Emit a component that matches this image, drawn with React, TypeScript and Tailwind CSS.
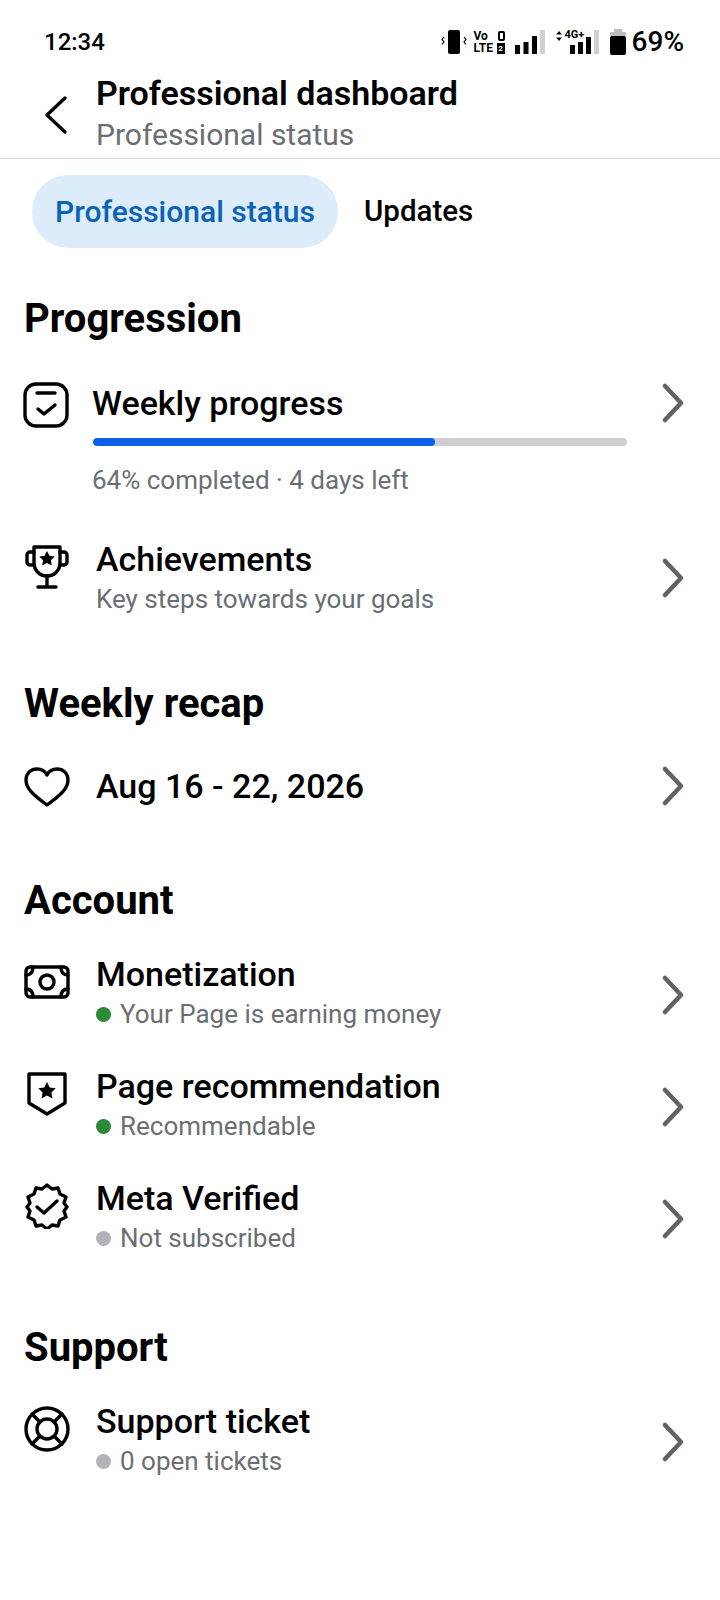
import type { ReactNode } from "react";

function Dot({ on }: { on?: boolean }) {
  return <span className={`w-[15px] h-[15px] rounded-full mr-[9px] ${on ? "bg-[#2b8a36]" : "bg-[#b0b3b8]"}`} />;
}

function IconSlot({ children }: { children: ReactNode }) {
  return <div className="w-[72px] pl-[24px] pb-[22px] flex items-center shrink-0">{children}</div>;
}

function Chevron({ className }: { className?: string }) {
  return (
    <svg width="22" height="40" viewBox="0 0 22 40" fill="none" stroke="#5f6368" strokeWidth="4.5" strokeLinecap="round" strokeLinejoin="round" className={`shrink-0 ${className ?? ""}`}>
      <path d="M3 3l16 17L3 37" />
    </svg>
  );
}

function Row({ icon, title, sub, on, className, chevron = "mt-[3px]" }: { icon: ReactNode; title: string; sub: ReactNode; on?: boolean; className?: string; chevron?: string }) {
  return (
    <div className={`flex items-center h-[84px] pr-[36px] ${className ?? ""}`}>
      <IconSlot>{icon}</IconSlot>
      <div className="flex-1 pl-[24px]">
        <div className="text-[34px] leading-[42px] text-black font-medium">{title}</div>
        <div className="flex items-center text-[26px] leading-[38px] text-[#6a6f74]">
          {on !== undefined && <Dot on={on} />}
          {sub}
        </div>
      </div>
      <Chevron className={chevron} />
    </div>
  );
}

function Heading({ children, className }: { children: ReactNode; className?: string }) {
  return <h2 className={`pl-[24px] text-[40px] leading-[46px] font-bold text-black ${className ?? ""}`}>{children}</h2>;
}

function StatusIcons() {
  return (
    <div className="flex items-center h-[30px]">
      <svg width="26" height="26" viewBox="0 0 26 26">
        <rect x="7" y="1" width="12" height="24" rx="2" fill="#000" />
        <path d="M3 8l-2 2.500 2 2.500-2 2.500M23 8l2 2.500-2 2.500 2 2.500" fill="none" stroke="#000" strokeWidth="1.2" />
      </svg>
      <div className="ml-[7px] w-[31px] flex flex-col font-bold text-black text-[12px] leading-[12px]">
        <div className="flex items-center justify-between">
          <span>Vo</span>
          <span className="w-[7px] h-[10px] border-2 border-black rounded-[2px]" />
        </div>
        <div className="flex items-center justify-between">
          <span>LTE</span>
          <span className="w-[8px] h-[11px] bg-black text-white text-[8px] leading-[11px] text-center">2</span>
        </div>
      </div>
      <svg width="30" height="24" viewBox="0 0 30 24" className="ml-[10px]">
        <rect x="0" y="15" width="5" height="9" fill="#000" />
        <rect x="8.500" y="12" width="5" height="12" fill="#000" />
        <rect x="17" y="6" width="5" height="18" fill="#000" />
        <rect x="25" y="0" width="5" height="24" fill="#d0d0d0" />
      </svg>
      <div className="relative w-[43px] h-[24px] ml-[11px]">
        <svg className="absolute left-0 top-0" width="43" height="24" viewBox="0 0 43 24">
          <path d="M3 1l3 3.500H0zM3 11l3-3.500H0z" fill="#000" />
          <rect x="14" y="15" width="5" height="9" fill="#000" />
          <rect x="22" y="12" width="5" height="12" fill="#000" />
          <rect x="30" y="7" width="5" height="17" fill="#000" />
          <rect x="38" y="0" width="5" height="24" fill="#d0d0d0" />
        </svg>
        <span className="absolute left-[9px] top-[-1px] text-[11px] leading-[12px] font-bold text-black">4G+</span>
      </div>
      <svg width="16" height="26" viewBox="0 0 16 26" className="ml-[11px]">
        <rect x="4" y="0" width="8" height="4" fill="#bdbdbd" />
        <rect x="0" y="3" width="16" height="4" rx="1" fill="#bdbdbd" />
        <rect x="0" y="7" width="16" height="19" rx="2" fill="#000" />
      </svg>
      <span className="ml-[6px] text-[28px] leading-[30px] font-medium text-black">69%</span>
    </div>
  );
}

const ic = { fill: "none", stroke: "#000", strokeWidth: 3.4, strokeLinecap: "round" as const, strokeLinejoin: "round" as const };
const trophyStar = "M23 7l2.400 4.800 5.300.8-3.800 3.700.9 5.300-4.800-2.500-4.800 2.500.9-5.300-3.800-3.700 5.300-.8z";
const shieldStar = "M23 11l2.700 5.400 6 .9-4.300 4.200 1 5.900-5.400-2.800-5.400 2.800 1-5.900-4.300-4.200 6-.9z";

export default function App() {
  return (
    <div className="w-[720px] h-[1600px] bg-white overflow-hidden font-['Roboto',sans-serif]">
      <div className="flex items-center justify-between h-[70px] pl-[44px] pr-[36px] pt-[14px]">
        <span className="text-[24px] font-medium text-black">12:34</span>
        <StatusIcons />
      </div>

      <div className="flex items-center h-[88px] border-b border-[#d4d6d8] box-content">
        <svg width="24" height="40" viewBox="0 0 24 40" fill="none" stroke="#000" strokeWidth="3.4" strokeLinecap="round" strokeLinejoin="round" className="ml-[44px] mr-[28px] mt-[2px]">
          <path d="M21 3L3 20l18 17" />
        </svg>
        <div>
          <div className="text-[34px] leading-[42px] font-semibold text-black">Professional dashboard</div>
          <div className="text-[30px] leading-[42px] text-[#6a6f74]">Professional status</div>
        </div>
      </div>

      <div className="flex items-center pl-[32px] pt-[16px]">
        <div className="h-[73px] w-[306px] flex items-center justify-center rounded-[36px] bg-[#dcecfb] text-[30px] font-medium text-[#0a63b8]">Professional status</div>
        <div className="ml-[26px] text-[29.500px] font-medium text-black">Updates</div>
      </div>

      <Heading className="mt-[48px]">Progression</Heading>

      <div className="flex items-start pr-[36px] mt-[40px]">
        <svg width="46" height="46" viewBox="0 0 46 46" className="ml-[23px] shrink-0" {...ic}>
          <rect x="2" y="2" width="42" height="42" rx="11" />
          <path d="M14 11h18M15 27l6 5 11-9" />
        </svg>
        <div className="flex-1 ml-[23px]">
          <div className="text-[34px] leading-[42px] font-medium text-black">Weekly progress</div>
          <div className="h-[8px] w-[534px] mt-[14px] ml-[1px] rounded-full bg-[#cdcfd2] overflow-hidden">
            <div className="h-full w-[64%] rounded-full bg-[#0b5fe8]" />
          </div>
          <div className="text-[26px] leading-[36px] text-[#6a6f74] mt-[16px]">64% completed · 4 days left</div>
        </div>
        <Chevron className="mt-[1px]" />
      </div>

      <Row
        className="mt-[38px]"
        chevron=""
        title="Achievements"
        sub="Key steps towards your goals"
        icon={
          <svg width="46" height="46" viewBox="0 0 46 46" {...ic}>
            <path d="M10 3h26v16a13 13 0 0 1-26 0z" />
            <path d="M10 8H6a3 3 0 0 0-3 3v7a3 3 0 0 0 3 3h4.500M36 8h4a3 3 0 0 1 3 3v7a3 3 0 0 1-3 3h-4.500M23 32v10M14 43h18" />
            <path d={trophyStar} fill="#000" stroke="none" />
          </svg>
        }
      />

      <Heading className="mt-[61px]">Weekly recap</Heading>

      <div className="flex items-center h-[70px] pr-[36px] mt-[24px]">
        <div className="w-[72px] pl-[24px] pt-[2px] flex items-center shrink-0">
          <svg width="46" height="40" viewBox="0 0 46 40" {...ic}>
            <path d="M23 38C8 27 2 21 2 13 2 6 7 2 13 2c4 0 8 2 10 6 2-4 6-6 10-6 6 0 11 4 11 11 0 8-6 14-21 25z" />
          </svg>
        </div>
        <div className="flex-1 pl-[24px] text-[34px] font-medium text-black">Aug 16 - 22, 2026</div>
        <Chevron />
      </div>

      <Heading className="mt-[57px]">Account</Heading>

      <Row
        className="mt-[27px]"
        title="Monetization"
        sub="Your Page is earning money"
        on
        icon={
          <svg width="46" height="34" viewBox="0 0 46 34" {...ic}>
            <rect x="2" y="2" width="42" height="30" rx="4" />
            <circle cx="23" cy="17" r="7" />
            <path d="M2 10c5 0 7-3 7-8M37 2c0 5 2 8 7 8M2 24c5 0 7 3 7 8M37 32c0-5 2-8 7-8" />
          </svg>
        }
      />
      <Row
        className="mt-[28px]"
        title="Page recommendation"
        sub="Recommendable"
        on
        icon={
          <svg width="46" height="46" viewBox="0 0 46 46" {...ic}>
            <path d="M5 3h36v29l-18 11L5 32z" />
            <path d={shieldStar} fill="#000" stroke="none" />
          </svg>
        }
      />
      <Row
        className="mt-[28px]"
        title="Meta Verified"
        sub="Not subscribed"
        on={false}
        icon={
          <svg width="46" height="46" viewBox="0 0 46 46" {...ic}>
            <path d="M23 2l5 4 6-1 2 6 6 3-2 6 3 4-3 4 2 6-6 3-2 6-6-1-5 4-5-4-6 1-2-6-6-3 2-6-3-4 3-4-2-6 6-3 2-6 6 1z" />
            <path d="M13 24l7 6 13-12" />
          </svg>
        }
      />

      <Heading className="mt-[66px]">Support</Heading>

      <Row
        className="mt-[27px]"
        title="Support ticket"
        sub="0 open tickets"
        on={false}
        icon={
          <svg width="46" height="46" viewBox="0 0 46 46" {...ic}>
            <circle cx="23" cy="23" r="21" />
            <circle cx="23" cy="23" r="10" />
            <path d="M8 8l8 8M38 8l-8 8M8 38l8-8M38 38l-8-8" />
          </svg>
        }
      />
    </div>
  );
}
